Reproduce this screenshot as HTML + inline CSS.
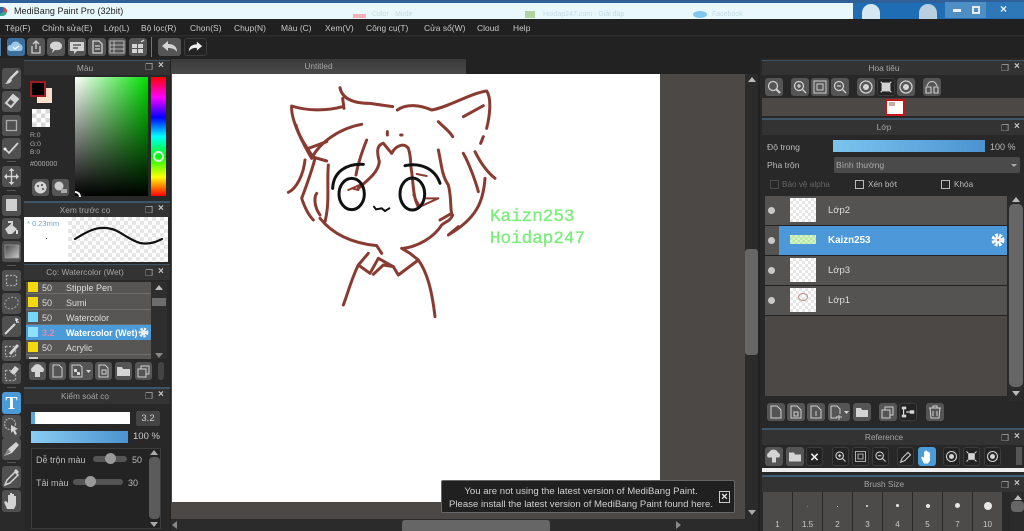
<!DOCTYPE html>
<html><head><meta charset="utf-8"><style>
html,body{margin:0;padding:0;width:1024px;height:531px;overflow:hidden;background:#262626}
body{position:relative;font-family:"Liberation Sans","Noto Sans CJK SC",sans-serif;font-size:9px;color:#bdbdbd;filter:blur(.35px)}
div,span,svg{position:absolute;box-sizing:border-box}
svg{stroke-width:1.3}
.t{white-space:nowrap;line-height:12px}
.m{top:22px;font-size:8.4px;color:#c8c8c8;white-space:nowrap;line-height:13px;letter-spacing:.05px}
.h{background:#333;height:15px;text-align:center;line-height:15px;color:#a5a5a5;font-size:8.3px;border-top:1px solid #3d5568}
.b{background:#555;border-radius:3px;width:18px;height:18px}
.d{background:#232323;border:1px solid #3c3c3c;border-radius:3px}
.tb{left:2px;width:19px;height:21px;background:#505050;border-radius:3px}
.b svg,.tb svg,.d svg{left:0;top:0;width:100%;height:100%}
.w{fill:#d4d4d4;stroke:none}
.s{fill:none;stroke:#cfcfcf}
.row{left:26px;width:125px;height:15px;background:#585654;border-bottom:1px solid #6d6d6d;color:#ddd;font-size:9px;line-height:16px}
.sw{left:2px;top:2px;width:10px;height:10px}
.lay{left:765px;width:242px;height:30px;background:#555351;border-bottom:1px solid #222}
.eye{left:3px;top:11px;width:7px;height:7px;border-radius:50%;background:#c9c9c9}
.th{left:25px;top:2px;width:26px;height:24px;background:repeating-conic-gradient(#e6e6e6 0 25%,#fff 0 50%) 0 0/6px 6px}
.ln{left:63px;top:9px;color:#ddd;font-size:9.5px;white-space:nowrap;line-height:12px}
.cell{top:492px;width:29px;height:39px;background:#4d4b49}
.cell i{position:absolute;left:0;right:0;top:28px;text-align:center;font-style:normal;font-size:8px;color:#ccc;line-height:10px}
.cell b{position:absolute;background:#e8e8e8;border-radius:50%}
</style></head><body>

<!-- title bar -->
<div style="left:0;top:0;width:1024px;height:19px;background:#e8f8fc"></div>
<div style="left:0;top:0;width:1024px;height:3px;background:#2f6098"></div>
<div style="left:853px;top:3px;width:171px;height:16px;background:#1f6db5"></div>
<div style="left:862px;top:4px;width:18px;height:15px;border-radius:9px 9px 0 0;background:#d5e7f3"></div>
<div style="left:919px;top:4px;width:18px;height:15px;border-radius:9px 9px 0 0;background:#b9cfe0"></div>
<div style="left:945px;top:2px;width:79px;height:16px;background:#4d8fc4"></div>
<div style="left:986px;top:2px;width:38px;height:16px;background:#2f78b8"></div>
<div style="left:953px;top:9px;width:8px;height:3px;background:#f0f0f0"></div>
<div style="left:972px;top:6px;width:8px;height:8px;border:2px solid #e8e8e8"></div>
<div class="t" style="left:1000px;top:3px;color:#eee;font-size:12px;font-weight:bold">×</div>
<div style="left:0;top:7px;width:7px;height:9px;border-radius:0 5px 5px 0;background:conic-gradient(#d44 0 30%,#3a8 0 65%,#36a 0)"></div>
<div class="t" style="left:14px;top:5px;color:#222;font-size:9px;letter-spacing:.05px">MediBang Paint Pro (32bit)</div>
<div style="left:353px;top:14px;width:13px;height:4px;background:#f0b0b8"></div>
<div class="t" style="left:372px;top:9px;font-size:7px;color:#c4dce4">Color · Mode</div>
<div style="left:525px;top:11px;width:10px;height:7px;background:#b0d4a0"></div>
<div class="t" style="left:543px;top:9px;font-size:7px;color:#c4dce4">Hoidap247.com · Giải đáp</div>
<div style="left:693px;top:11px;width:14px;height:7px;border-radius:50%;background:#80c8f0"></div>
<div class="t" style="left:712px;top:9px;font-size:7px;color:#c4dce4">Facebook</div>

<!-- menu -->
<div style="left:0;top:19px;width:1024px;height:17px;background:#202020;border-bottom:1px solid #2c2c2c"></div>
<span class="m" style="left:5px">Tệp(F)</span>
<span class="m" style="left:42px">Chỉnh sửa(E)</span>
<span class="m" style="left:104px">Lớp(L)</span>
<span class="m" style="left:141px">Bộ lọc(R)</span>
<span class="m" style="left:190px">Chọn(S)</span>
<span class="m" style="left:234px">Chụp(N)</span>
<span class="m" style="left:281px">Màu (C)</span>
<span class="m" style="left:325px">Xem(V)</span>
<span class="m" style="left:366px">Công cụ(T)</span>
<span class="m" style="left:424px">Cửa sổ(W)</span>
<span class="m" style="left:477px">Cloud</span>
<span class="m" style="left:513px">Help</span>

<!-- toolbar -->
<div style="left:0;top:37px;width:1024px;height:21px;background:#222"></div>
<div style="left:0;top:38px;width:1px;height:18px;background:#4a7ea6"></div>
<div class="b" style="left:7px;top:38px;background:#3c6f9c"><svg viewBox="0 0 18 18"><path d="M3 13a3 3 0 0 1 1-6 5 5 0 0 1 9-1 4 4 0 0 1 1 7z" fill="#9cc8ea"/><path d="M6 9l2 2 4-3" stroke="#fff" stroke-width="1.4" fill="none"/></svg></div>
<div class="b" style="left:27px;top:38px"><svg viewBox="0 0 18 18"><path class="s" d="M5 8v7h8V8M9 11V3M6 6l3-3 3 3"/></svg></div>
<div class="b" style="left:47px;top:38px"><svg viewBox="0 0 18 18"><path class="w" d="M3 8c0-6 12-6 12 0 0 5-6 4-7 4l-3 3 1-4c-2 0-3-1-3-3z"/></svg></div>
<div class="b" style="left:68px;top:38px"><svg viewBox="0 0 18 18"><path class="w" d="M2 4h14v9H9l-3 3v-3H2z"/><path d="M5 7h8M5 10h5" stroke="#444"/></svg></div>
<div class="b" style="left:88px;top:38px"><svg viewBox="0 0 18 18"><path class="s" d="M5 3h6l3 3v9H5zM7 8h5M7 11h5"/></svg></div>
<div class="b" style="left:108px;top:38px"><svg viewBox="0 0 18 18"><path class="s" d="M2 3h14v12H2zM2 7h14M2 11h14M6 3v12" stroke-width=".8"/></svg></div>
<div class="b" style="left:129px;top:38px"><svg viewBox="0 0 18 18"><path class="w" d="M3 6h5v4H3zM9 6h5v4H9zM3 11h5v4H3zM9 11h5v4H9z"/><path d="M12 4l3-2" stroke="#ddd"/></svg></div>
<div style="left:151px;top:37px;width:1px;height:20px;background:#4a7ea6"></div>
<div class="b" style="left:158px;top:38px;width:23px"><svg viewBox="0 0 23 18"><path class="w" d="M4 8l6-5v3c6 0 9 3 9 8-2-3-5-4-9-4v3z"/></svg></div>
<div class="d" style="left:184px;top:38px;width:23px;height:18px"><svg viewBox="0 0 23 18"><path d="M19 8l-6-5v3c-6 0-9 3-9 8 2-3 5-4 9-4v3z" fill="#eee"/></svg></div>

<!-- left tools -->
<div style="left:0;top:58px;width:24px;height:473px;background:#2a2a2a"></div>
<div class="tb" style="top:68px"><svg viewBox="0 0 19 21"><path d="M16 3L8 11" stroke="#d4d4d4" stroke-width="2.600"/><path class="w" d="M8 10l2 2c-1 3-4 4-7 4 2-1 2-4 5-6z"/></svg></div>
<div class="tb" style="top:91px"><svg viewBox="0 0 19 21"><path d="M4 12l7-8 5 4-7 8z" fill="none" stroke="#d4d4d4" stroke-width="2"/><path class="w" d="M10 5l6 3-3 4-5-4z"/></svg></div>
<div class="tb" style="top:115px"><svg viewBox="0 0 19 21"><rect x="4.500" y="5.500" width="10" height="10" fill="none" stroke="#aaa" stroke-width="1.300"/></svg></div>
<div class="tb" style="top:138px"><svg viewBox="0 0 19 21"><path d="M3 11l4 4 9-10" fill="none" stroke="#d4d4d4" stroke-width="1.800"/><circle cx="3" cy="11" r="1.500" fill="#eee"/></svg></div>
<div style="left:7px;top:161px;width:9px;height:1px;background:#555"></div>
<div class="tb" style="top:166px"><svg viewBox="0 0 19 21"><path d="M9.500 3v15M3 10.500h13" stroke="#d4d4d4" stroke-width="1.400"/><path class="w" d="M9.500 2l3 3h-6zM9.500 19l3-3h-6zM2 10.500l3-3v6zM17 10.500l-3-3v6z"/></svg></div>
<div style="left:7px;top:190px;width:9px;height:1px;background:#555"></div>
<div class="tb" style="top:195px"><svg viewBox="0 0 19 21"><rect x="4" y="4" width="11" height="12" fill="#d0d0d0"/></svg></div>
<div class="tb" style="top:218px"><svg viewBox="0 0 19 21"><path class="w" d="M3 11l6-5 6 5-5 5H6zM6 3h5v4H9V5H6z"/><path d="M15 12v4" stroke="#ddd" stroke-width="2"/></svg></div>
<div class="tb" style="top:241px"><svg viewBox="0 0 19 21"><defs><linearGradient id="g" x1="0" y1="0" x2="1" y2="1"><stop offset="0" stop-color="#444"/><stop offset="1" stop-color="#ccc"/></linearGradient></defs><rect x="3" y="4" width="14" height="13" fill="url(#g)" stroke="#999" stroke-width=".8"/></svg></div>
<div style="left:7px;top:265px;width:9px;height:1px;background:#555"></div>
<div class="tb" style="top:270px"><svg viewBox="0 0 19 21"><rect x="4.500" y="5.500" width="10" height="10" fill="none" stroke="#aaa" stroke-width="1.300" stroke-dasharray="2 1.500"/></svg></div>
<div class="tb" style="top:293px"><svg viewBox="0 0 19 21"><ellipse cx="9.500" cy="10" rx="7" ry="5.500" transform="rotate(-25 9.500 10)" fill="none" stroke="#999" stroke-width="1.200" stroke-dasharray="2 1.500"/></svg></div>
<div class="tb" style="top:316px"><svg viewBox="0 0 19 21"><path d="M3 18L13 8" stroke="#d4d4d4" stroke-width="2.200"/><path d="M14 2v3M17 6h-3M16 3l-2 2" stroke="#eee"/></svg></div>
<div class="tb" style="top:340px"><svg viewBox="0 0 19 21"><rect x="3.500" y="6.500" width="10" height="10" fill="none" stroke="#aaa" stroke-dasharray="2 1.500"/><path d="M7 13l8-9 2 2-8 9z" fill="#d4d4d4"/></svg></div>
<div class="tb" style="top:363px"><svg viewBox="0 0 19 21"><rect x="3.500" y="7.500" width="10" height="10" fill="none" stroke="#aaa" stroke-dasharray="2 1.500"/><path d="M8 9l5-6 4 3-5 6z" fill="#d4d4d4"/></svg></div>
<div style="left:7px;top:387px;width:9px;height:1px;background:#555"></div>
<div class="tb" style="top:392px;background:#4b9bd8;height:22px;text-align:center;color:#fff;font:bold 18px/22px 'Liberation Serif',serif">T</div>
<div class="tb" style="top:415px;height:23px"><svg viewBox="0 0 19 23"><circle cx="8" cy="9" r="5.500" fill="none" stroke="#aaa" stroke-width="1.300" stroke-dasharray="2 1"/><path class="w" d="M9 10l7 4-3 1 2 4-2 1-2-4-2 2z"/></svg></div>
<div class="tb" style="top:438px;height:22px"><svg viewBox="0 0 19 22"><path d="M2 18l4-7 8-7 3 3-7 8z" fill="#d4d4d4"/><path d="M2 18l4-7 3 3z" fill="#888"/></svg></div>
<div style="left:7px;top:462px;width:9px;height:1px;background:#555"></div>
<div class="tb" style="top:466px;height:22px"><svg viewBox="0 0 19 22"><path d="M3 19l2-5 8-8 3 3-8 8z" fill="none" stroke="#d4d4d4" stroke-width="1.500"/><path class="w" d="M12 5l2-2 3 3-2 2z"/></svg></div>
<div class="tb" style="top:490px;height:22px"><svg viewBox="0 0 19 22"><path class="w" d="M5 19l-3-7 2-1 2 2V5h2v6V3h2v8V4h2v7V6h2v9l-2 4z"/></svg></div>

<!-- left panels -->
<div style="left:24px;top:59px;width:146px;height:472px;background:#282828"></div>
<div class="h" style="left:24px;top:60px;width:146px;padding-right:24px">Màu</div>
<div class="t" style="left:145px;top:61px;color:#aaa;font-size:9px">❐</div>
<div class="t" style="left:158px;top:60px;color:#c8c8c8;font-size:10px;font-weight:bold">×</div>
<div style="left:37px;top:88px;width:15px;height:15px;background:#fbdfcb"></div>
<div style="left:30px;top:81px;width:16px;height:16px;background:#000;border:2px solid #a11a1f"></div>
<div style="left:32px;top:109px;width:18px;height:18px;background:repeating-conic-gradient(#d8d8d8 0 25%,#fff 0 50%) 0 0/9px 9px"></div>
<div class="t" style="left:30px;top:132px;font-size:6.800px;color:#aaa;line-height:8.500px">R:0<br>G:0<br>B:0</div>
<div class="t" style="left:30px;top:159px;font-size:7px;color:#aaa">#000000</div>
<div style="left:75px;top:77px;width:73px;height:119px;background:linear-gradient(to top,#000,rgba(0,0,0,0)),linear-gradient(to right,#fff,#00e000)"></div>
<div style="left:151px;top:77px;width:15px;height:119px;background:linear-gradient(to bottom,#f00,#f0f 17%,#00f 34%,#0ff 50%,#0f0 67%,#ff0 84%,#f00)"></div>
<div style="left:153px;top:151px;width:11px;height:11px;border-radius:50%;border:2px solid #e8e8e8"></div>
<div style="left:75px;top:191px;width:6px;height:6px;border-top:2px solid #eee;border-right:2px solid #eee;border-radius:0 6px 0 0"></div>
<div class="b" style="left:32px;top:179px;width:17px;height:17px"><svg viewBox="0 0 17 17"><circle cx="8.500" cy="8.500" r="6" fill="#d4d4d4"/><circle cx="6" cy="7" r="1" fill="#444"/><circle cx="10" cy="6" r="1" fill="#444"/><circle cx="11" cy="10" r="1" fill="#444"/></svg></div>
<div class="b" style="left:52px;top:179px;width:17px;height:17px"><svg viewBox="0 0 17 17"><circle cx="7" cy="7" r="4.500" fill="#ccc"/><rect x="9" y="10" width="6" height="4" fill="#aaa"/></svg></div>
<div style="left:24px;top:201px;width:146px;height:2px;background:#3d5568"></div>

<div class="h" style="left:24px;top:203px;width:146px;padding-right:24px;border:0">Xem trước cọ</div>
<div class="t" style="left:145px;top:204px;color:#aaa;font-size:9px">❐</div>
<div class="t" style="left:158px;top:203px;color:#c8c8c8;font-size:10px;font-weight:bold">×</div>
<div style="left:24px;top:217px;width:44px;height:45px;background:#fff"></div>
<div style="left:68px;top:217px;width:100px;height:45px;background:repeating-conic-gradient(#e6e6e6 0 25%,#fff 0 50%) 0 0/8px 8px"></div>
<div class="t" style="left:27px;top:218px;font-size:7.500px;color:#6aa8cf">* 0.23mm</div>
<div style="left:46px;top:238px;width:1px;height:1px;background:#333"></div>
<svg style="left:68px;top:217px" width="100" height="45" viewBox="0 0 100 45"><path d="M7 22C20 14 28 10 38 11 52 12 58 22 72 26 82 28 90 24 94 22" fill="none" stroke="#111" stroke-width="2.200" stroke-linecap="round"/></svg>

<div style="left:24px;top:264px;width:146px;height:1px;background:#3d5568"></div>
<div class="h" style="left:24px;top:265px;width:146px;padding-right:24px;border:0">Cọ: Watercolor (Wet)</div>
<div class="t" style="left:145px;top:267px;color:#aaa;font-size:9px">❐</div>
<div class="t" style="left:158px;top:266px;color:#c8c8c8;font-size:10px;font-weight:bold">×</div>
<div style="left:26px;top:282px;width:125px;height:77px;overflow:hidden;background:#585654"></div>
<div class="row" style="top:282px;height:12px;overflow:hidden"><div class="sw" style="top:0;background:#f5d90e"></div><span style="left:16px;top:-2px">50</span><span style="left:40px;top:-2px;white-space:nowrap">Stipple Pen</span></div>
<div class="row" style="top:295px"><div class="sw" style="background:#f5d90e"></div><span style="left:16px">50</span><span style="left:40px">Sumi</span></div>
<div class="row" style="top:310px"><div class="sw" style="background:#76d8f8"></div><span style="left:16px">50</span><span style="left:40px">Watercolor</span></div>
<div class="row" style="top:325px;background:#4b9bd8;font-weight:bold;color:#fff;border:0"><div class="sw" style="background:#8fe0fb"></div><span style="left:16px;color:#e08aa8">3.2</span><span style="left:40px;white-space:nowrap;width:76px;overflow:hidden">Watercolor (Wet)</span><svg style="left:112px;top:2px" width="11" height="11" viewBox="0 0 11 11"><circle cx="5.500" cy="5.500" r="3.200" fill="none" stroke="#eee" stroke-width="3.500" stroke-dasharray="2 1"/><circle cx="5.500" cy="5.500" r="2.500" fill="#eee"/></svg></div>
<div class="row" style="top:340px"><div class="sw" style="background:#f5d90e"></div><span style="left:16px">50</span><span style="left:40px">Acrylic</span></div>
<div style="left:29px;top:357px;width:9px;height:2px;background:#ccc"></div>
<div style="left:151px;top:282px;width:16px;height:77px;background:#2e2e2e"></div>
<div style="left:152px;top:298px;width:14px;height:8px;background:#6d6d6d"></div>
<div style="left:155px;top:285px;border:4px solid transparent;border-bottom:5px solid #bbb;border-top:0"></div>
<div style="left:155px;top:353px;border:4px solid transparent;border-top:5px solid #888;border-bottom:0"></div>
<div class="b" style="left:29px;top:362px;width:17px"><svg viewBox="0 0 17 18"><path class="w" d="M3 10a3 3 0 0 1 1-5 5 5 0 0 1 9 0 3 3 0 0 1 1 5h-3v5H6v-5z"/></svg></div>
<div class="b" style="left:49px;top:362px;width:17px"><svg viewBox="0 0 17 18"><path class="s" d="M4 3h6l3 3v9H4z" stroke-width="1"/></svg></div>
<div class="b" style="left:69px;top:362px;width:24px"><svg viewBox="0 0 24 18"><path class="s" d="M3 3h8l2 2v10H3z" stroke-width="1"/><path class="w" d="M5 7h3v3H5zM8 10h3v3H8zM17 8h5l-2.500 3z"/></svg></div>
<div class="b" style="left:95px;top:362px;width:17px"><svg viewBox="0 0 17 18"><path class="s" d="M4 3h6l3 3v9H4zM7 8h4v4H7z" stroke-width="1"/></svg></div>
<div class="b" style="left:115px;top:362px;width:17px"><svg viewBox="0 0 17 18"><path class="w" d="M2 5h5l1 2h7v7H2z"/></svg></div>
<div class="b" style="left:135px;top:362px;width:17px"><svg viewBox="0 0 17 18"><path class="s" d="M3 7h8v8H3zM6 7V4h8v8h-3" stroke-width="1"/></svg></div>
<div class="b" style="left:158px;top:362px;width:6px;background:#444"></div>

<div style="left:24px;top:387px;width:146px;height:2px;background:#3d5568"></div>
<div class="h" style="left:24px;top:389px;width:146px;padding-right:24px;border:0">Kiểm soát cọ</div>
<div class="t" style="left:145px;top:390px;color:#aaa;font-size:9px">❐</div>
<div class="t" style="left:158px;top:389px;color:#c8c8c8;font-size:10px;font-weight:bold">×</div>
<div style="left:31px;top:412px;width:99px;height:12px;background:#fff"></div>
<div style="left:31px;top:412px;width:4px;height:12px;background:#5aa5dd"></div>
<div style="left:136px;top:411px;width:24px;height:15px;background:#444;border-radius:2px;color:#ccc;text-align:center;font-size:9.500px;line-height:15px">3.2</div>
<div style="left:31px;top:431px;width:97px;height:12px;background:linear-gradient(to right,#8accf2,#4b93d0)"></div>
<div class="t" style="left:133px;top:431px;color:#ccc;font-size:9.500px">100 %</div>
<div style="left:31px;top:448px;width:130px;height:81px;background:#232323;border:1px solid #3c3c3c"></div>
<div class="t" style="left:36px;top:454px;color:#bbb;font-size:9px">Dễ trộn màu</div>
<div style="left:93px;top:456px;width:34px;height:6px;background:#555;border-radius:3px"></div>
<div style="left:105px;top:453px;width:11px;height:11px;background:#999;border-radius:50%"></div>
<div class="t" style="left:132px;top:454px;color:#bbb;font-size:9px">50</div>
<div class="t" style="left:36px;top:477px;color:#bbb;font-size:9px">Tải màu</div>
<div style="left:73px;top:479px;width:50px;height:6px;background:#555;border-radius:3px"></div>
<div style="left:85px;top:476px;width:11px;height:11px;background:#999;border-radius:50%"></div>
<div class="t" style="left:128px;top:477px;color:#bbb;font-size:9px">30</div>
<div style="left:149px;top:457px;width:11px;height:62px;background:#5b5b5b;border-radius:4px"></div>
<div style="left:150px;top:450px;border:4px solid transparent;border-bottom:5px solid #aaa;border-top:0"></div>
<div style="left:150px;top:522px;border:4px solid transparent;border-top:5px solid #aaa;border-bottom:0"></div>

<!-- canvas area -->
<div style="left:170px;top:58px;width:590px;height:473px;background:#222"></div>
<div style="left:171px;top:59px;width:295px;height:15px;background:linear-gradient(#3a3a3a,#4a4a4a);text-align:center;color:#a5a5a5;font-size:8.300px;line-height:15px">Untitled</div>
<div style="left:171px;top:74px;width:574px;height:445px;background:#4b4846"></div>
<div style="left:172px;top:74px;width:488px;height:428px;background:#fff"></div>
<svg style="left:270px;top:75px" width="330" height="250" viewBox="0 0 990 750">
<g fill="none" stroke="#8a3b31" stroke-width="9" stroke-linecap="round" stroke-linejoin="round">
<path d="M218 95C170 108 110 108 65 93 62 130 90 190 125 250 150 200 210 160 275 148"/>
<path d="M78 150C85 180 105 210 125 240M110 222L170 200M125 245L170 258"/>
<path d="M210 38C215 65 240 85 300 85L368 95M218 70L222 100"/>
<path d="M382 105C410 85 450 90 485 105 540 95 600 55 650 48 665 70 660 120 650 160"/>
<path d="M580 125L640 92M505 140C525 160 540 170 548 185M640 185L632 205"/>
<path d="M352 170V180M392 180H396" stroke-width="9"/>
<path d="M290 195C280 220 265 260 258 300"/>
<path d="M340 205C320 210 320 230 328 260 325 290 300 310 265 340"/>
<path d="M340 205L365 235C375 215 400 200 415 220 425 250 420 270 425 290 430 330 430 370 445 395"/>
<path d="M505 225C515 270 515 300 535 330 545 370 540 395 545 415L510 435"/>
<path d="M580 235C600 270 620 330 625 350M615 230C630 260 650 290 675 310"/>
<path d="M645 310C640 380 620 430 535 480L565 455"/>
<path d="M105 255C100 300 80 340 55 352M135 250C125 290 110 330 95 370 105 400 115 420 130 435"/>
<path d="M175 270C170 330 180 380 165 440M140 355C130 370 135 400 150 420"/>
<path d="M150 430C190 480 250 505 320 512L335 535M400 520C440 515 490 490 515 450 525 440 540 440 548 420"/>
<path d="M295 535L265 570 300 595 325 550 370 575 385 600 445 555 420 535 395 520"/>
<path d="M310 598L340 570 370 575"/>
<path d="M265 570C245 610 235 650 220 690M445 555C470 590 485 640 495 725"/>
<path d="M235 345L280 325M245 340L265 345M430 360L450 395 505 370M470 370L505 370M440 297L470 303" stroke-width="6"/>
</g>
<g fill="none" stroke="#111" stroke-width="9" stroke-linecap="round">
<path d="M188 340C190 290 230 265 280 268M405 272C450 262 495 280 510 325"/>
<ellipse cx="245" cy="357" rx="38" ry="47"/>
<ellipse cx="427" cy="357" rx="37" ry="48"/>
<path d="M312 395L318 403 335 400 345 408 358 400" stroke-width="6"/>
</g>
</svg>
<div class="t" style="left:490px;top:207px;font:17.600px/21.500px 'Liberation Mono',monospace;color:#78ee78;-webkit-text-stroke:.3px #78ee78">Kaizn253<br>Hoidap247</div>

<!-- scrollbars -->
<div style="left:745px;top:74px;width:13px;height:445px;background:#2b2b2b"></div>
<div style="left:745px;top:249px;width:13px;height:106px;background:#666;border-radius:3px"></div>
<div style="left:748px;top:77px;border:4px solid transparent;border-bottom:5px solid #bbb;border-top:0"></div>
<div style="left:748px;top:510px;border:4px solid transparent;border-top:5px solid #aaa;border-bottom:0"></div>
<div style="left:171px;top:519px;width:587px;height:12px;background:#2b2b2b"></div>
<div style="left:402px;top:520px;width:148px;height:11px;background:#666;border-radius:3px 3px 0 0"></div>
<div style="left:172px;top:521px;border:4px solid transparent;border-right:5px solid #888;border-left:0"></div>
<div style="left:676px;top:521px;border:4px solid transparent;border-left:5px solid #888;border-right:0"></div>

<!-- notification -->
<div style="left:441px;top:480px;width:294px;height:33px;background:#202020;border:1px solid #666;border-radius:2px"></div>
<div class="t" style="left:443px;top:485px;width:276px;text-align:center;color:#d0d0d0;font-size:9.600px;line-height:13px">You are not using the latest version of MediBang Paint.<br>Please install the latest version of MediBang Paint found here.</div>
<div style="left:719px;top:491px;width:11px;height:12px;border:1px solid #ccc;color:#eee;font:bold 11px/10px 'Liberation Sans',sans-serif;text-align:center">×</div>

<!-- right panels -->
<div style="left:760px;top:58px;width:264px;height:473px;background:#282828"></div>
<div class="h" style="left:762px;top:60px;width:262px;padding-right:18px;line-height:14px">Hoa tiêu</div>
<div class="t" style="left:1001px;top:62px;color:#aaa;font-size:9px">❐</div>
<div class="t" style="left:1014px;top:61px;color:#c8c8c8;font-size:10px;font-weight:bold">×</div>
<div class="b" style="left:765px;top:78px"><svg viewBox="0 0 18 18"><circle cx="8" cy="8" r="4.500" class="s"/><path class="s" d="M11 11l4 4" stroke-width="2"/></svg></div>
<div class="b" style="left:791px;top:78px"><svg viewBox="0 0 18 18"><circle cx="8" cy="8" r="4.500" class="s"/><path class="s" d="M11 11l4 4M6 8h4M8 6v4"/></svg></div>
<div class="b" style="left:811px;top:78px"><svg viewBox="0 0 18 18"><path class="s" d="M3 3h12v12H3zM6 6h6v6H6z" stroke-width="1"/></svg></div>
<div class="b" style="left:831px;top:78px"><svg viewBox="0 0 18 18"><circle cx="8" cy="8" r="4.500" class="s"/><path class="s" d="M11 11l4 4M6 8h4"/></svg></div>
<div class="b" style="left:857px;top:78px"><svg viewBox="0 0 18 18"><circle cx="9" cy="9" r="6" class="s"/><circle cx="9" cy="9" r="3" class="w"/></svg></div>
<div class="d" style="left:877px;top:78px;width:18px;height:18px"><svg viewBox="0 0 18 18"><rect x="4" y="4" width="10" height="10" class="w"/><path class="s" d="M3 3l2 2M15 3l-2 2M3 15l2-2M15 15l-2-2"/></svg></div>
<div class="b" style="left:897px;top:78px"><svg viewBox="0 0 18 18"><circle cx="9" cy="9" r="6" class="s"/><circle cx="9" cy="9" r="3" class="w"/></svg></div>
<div class="b" style="left:923px;top:78px"><svg viewBox="0 0 18 18"><path class="s" d="M3 9h5v6H3zM11 9h4v6h-4zM4 8c2-6 8-6 10 0" stroke-width="1.100"/></svg></div>
<div style="left:762px;top:98px;width:262px;height:18px;background:#4b4846"></div>
<div style="left:885px;top:99px;width:20px;height:17px;background:#fff;border:2px solid #c01818"></div>
<div style="left:889px;top:102px;width:6px;height:4px;background:#cfa8a0"></div>

<div style="left:762px;top:118px;width:262px;height:2px;background:#3d5568"></div>
<div class="h" style="left:762px;top:120px;width:262px;padding-right:18px;border:0">Lớp</div>
<div class="t" style="left:1001px;top:122px;color:#aaa;font-size:9px">❐</div>
<div class="t" style="left:1014px;top:121px;color:#c8c8c8;font-size:10px;font-weight:bold">×</div>
<div class="t" style="left:767px;top:141px;color:#bbb;font-size:8.600px">Độ trong</div>
<div style="left:833px;top:140px;width:152px;height:12px;background:linear-gradient(to right,#7cc4ee,#4b93d0)"></div>
<div class="t" style="left:990px;top:141px;color:#bbb;font-size:9px">100 %</div>
<div class="t" style="left:767px;top:159px;color:#bbb;font-size:8.600px">Pha trộn</div>
<div style="left:834px;top:157px;width:186px;height:16px;background:#4a4a4a;border-radius:2px"></div>
<div class="t" style="left:836px;top:159px;color:#aaa;font-size:8.600px">Bình thường</div>
<div style="left:1011px;top:164px;border:3px solid transparent;border-top:3px solid #aaa;border-bottom:0"></div>
<div style="left:770px;top:180px;width:9px;height:9px;border:1px solid #4a4a4a"></div>
<div class="t" style="left:782px;top:179px;color:#666;font-size:8.200px">Bảo vệ alpha</div>
<div style="left:855px;top:180px;width:9px;height:9px;border:1px solid #bbb"></div>
<div class="t" style="left:868px;top:179px;color:#bbb;font-size:8.200px">Xén bớt</div>
<div style="left:941px;top:180px;width:9px;height:9px;border:1px solid #bbb"></div>
<div class="t" style="left:954px;top:179px;color:#bbb;font-size:8.200px">Khóa</div>

<div style="left:765px;top:196px;width:242px;height:200px;background:#4b4846"></div>
<div class="lay" style="top:196px"><div class="eye"></div><div class="th"></div><div class="ln">Lớp2</div></div>
<div class="lay" style="top:226px"><div class="eye"></div><div style="left:14px;top:0;width:228px;height:29px;background:#4c98d8"></div><div class="th" style="top:9px;height:9px;background:repeating-conic-gradient(#b8e8a8 0 25%,#d8f4c8 0 50%) 0 0/5px 5px"></div><div class="ln" style="color:#fff;font-weight:bold;font-size:9.800px">Kaizn253</div><svg style="left:226px;top:7px" width="14" height="14" viewBox="0 0 14 14"><circle cx="7" cy="7" r="4.500" fill="none" stroke="#fff" stroke-width="4" stroke-dasharray="2.500 1.200"/><circle cx="7" cy="7" r="3.500" fill="#f4f4f4"/><circle cx="7" cy="7" r="1" fill="#a55"/></svg></div>
<div class="lay" style="top:256px"><div class="eye"></div><div class="th"></div><div class="ln">Lớp3</div></div>
<div class="lay" style="top:286px"><div class="eye"></div><div class="th"><div style="left:8px;top:5px;width:10px;height:8px;border:1px solid #c08a8a;border-radius:50%"></div></div><div class="ln">Lớp1</div></div>
<div style="left:1008px;top:196px;width:15px;height:205px;background:#2b2b2b"></div>
<div style="left:1009px;top:204px;width:14px;height:183px;background:#666;border-radius:5px"></div>
<div style="left:1012px;top:197px;border:4px solid transparent;border-bottom:5px solid #bbb;border-top:0"></div>
<div style="left:1012px;top:391px;border:4px solid transparent;border-top:5px solid #bbb;border-bottom:0"></div>

<div class="b" style="left:767px;top:403px"><svg viewBox="0 0 18 18"><path class="s" d="M4 3h6l4 4v8H4z" stroke-width="1"/></svg></div>
<div class="b" style="left:787px;top:403px"><svg viewBox="0 0 18 18"><path class="s" d="M4 3h6l4 4v8H4zM7 9h4v4H7z" stroke-width="1"/></svg></div>
<div class="b" style="left:807px;top:403px"><svg viewBox="0 0 18 18"><path class="s" d="M4 3h6l4 4v8H4zM9 8v5" stroke-width="1"/></svg></div>
<div class="b" style="left:828px;top:403px;width:22px"><svg viewBox="0 0 22 18"><path class="s" d="M3 3h6l3 3v5M3 3v12h6M11 12v5M8 14h6" stroke-width="1"/><path class="w" d="M16 8h5l-2.500 3z"/></svg></div>
<div class="b" style="left:853px;top:403px"><svg viewBox="0 0 18 18"><path class="w" d="M3 5h5l1 2h6v7H3z"/></svg></div>
<div class="b" style="left:879px;top:403px"><svg viewBox="0 0 18 18"><path class="s" d="M3 7h8v8H3zM6 7V4h8v8h-3" stroke-width="1"/></svg></div>
<div class="d" style="left:899px;top:403px;width:18px;height:18px"><svg viewBox="0 0 18 18"><path class="w" d="M2 3h5v3H2zM2 12h5v3H2zM11 7h5v4h-5z"/><path d="M4 6v6M7 9h4" stroke="#ddd"/></svg></div>
<div class="b" style="left:926px;top:403px"><svg viewBox="0 0 18 18"><path class="s" d="M3 5h12M7 5V3h4v2M4 5l1 10h8l1-10M7 8v5M11 8v5" stroke-width="1"/></svg></div>

<div style="left:762px;top:428px;width:262px;height:2px;background:#3d5568"></div>
<div class="h" style="left:762px;top:430px;width:262px;padding-right:18px;border:0">Reference</div>
<div class="t" style="left:1001px;top:432px;color:#aaa;font-size:9px">❐</div>
<div class="t" style="left:1014px;top:431px;color:#c8c8c8;font-size:10px;font-weight:bold">×</div>
<div class="b" style="left:765px;top:447px;height:19px"><svg viewBox="0 0 18 18"><path class="w" d="M3 10a3 3 0 0 1 1-5 5 5 0 0 1 9 0 3 3 0 0 1 1 5h-3v5H7v-5z"/></svg></div>
<div class="b" style="left:786px;top:447px;height:19px"><svg viewBox="0 0 18 18"><path class="w" d="M3 5h5l1 2h6v7H3z"/></svg></div>
<div class="d" style="left:806px;top:447px;width:17px;height:19px"><svg viewBox="0 0 17 18"><path d="M5 6l7 7M12 6l-7 7" stroke="#eee" stroke-width="1.800"/></svg></div>
<div class="d" style="left:832px;top:447px;width:17px;height:19px"><svg viewBox="0 0 18 18"><circle cx="8" cy="8" r="4.500" class="s"/><path class="s" d="M11 11l4 4M6 8h4M8 6v4"/></svg></div>
<div class="d" style="left:852px;top:447px;width:17px;height:19px"><svg viewBox="0 0 18 18"><path class="s" d="M3 3h12v12H3zM6 6h6v6H6z" stroke-width="1"/></svg></div>
<div class="d" style="left:872px;top:447px;width:17px;height:19px"><svg viewBox="0 0 18 18"><circle cx="8" cy="8" r="4.500" class="s"/><path class="s" d="M11 11l4 4M6 8h4"/></svg></div>
<div class="d" style="left:897px;top:447px;width:17px;height:19px"><svg viewBox="0 0 18 18"><path class="s" d="M3 16l2-5 7-7 3 3-7 7z"/></svg></div>
<div class="b" style="left:918px;top:447px;height:19px;background:#4b9bd8"><svg viewBox="0 0 18 18"><path d="M6 16l-3-6 2-1 1 2V4h1.500v6V3H9v7V4h1.500v6V5H12v8l-2 3z" fill="#fff"/></svg></div>
<div class="d" style="left:943px;top:447px;width:17px;height:19px"><svg viewBox="0 0 18 18"><circle cx="9" cy="9" r="6" class="s"/><circle cx="9" cy="9" r="3" class="w"/></svg></div>
<div class="d" style="left:963px;top:447px;width:17px;height:19px"><svg viewBox="0 0 18 18"><rect x="5" y="5" width="8" height="8" class="w"/><path class="s" d="M3 3l2 2M15 3l-2 2M3 15l2-2M15 15l-2-2"/></svg></div>
<div class="d" style="left:984px;top:447px;width:17px;height:19px"><svg viewBox="0 0 18 18"><circle cx="9" cy="9" r="6" class="s"/><circle cx="9" cy="9" r="3" class="w"/></svg></div>
<div style="left:1016px;top:447px;width:6px;height:18px;background:#555"></div>
<div style="left:762px;top:468px;width:262px;height:4px;background:#eee"></div>

<div style="left:762px;top:475px;width:262px;height:2px;background:#3d5f70"></div>
<div class="h" style="left:762px;top:477px;width:262px;padding-right:18px;border:0">Brush Size</div>
<div class="t" style="left:1001px;top:479px;color:#aaa;font-size:9px">❐</div>
<div class="t" style="left:1014px;top:478px;color:#c8c8c8;font-size:10px;font-weight:bold">×</div>
<div class="cell" style="left:763px"><i>1</i></div>
<div class="cell" style="left:793px"><b style="left:14px;top:14px;width:1px;height:1px;background:#888"></b><i>1.5</i></div>
<div class="cell" style="left:823px"><b style="left:14px;top:14px;width:1px;height:1px"></b><i>2</i></div>
<div class="cell" style="left:853px"><b style="left:13px;top:13px;width:2px;height:2px"></b><i>3</i></div>
<div class="cell" style="left:883px"><b style="left:13px;top:12px;width:3px;height:3px"></b><i>4</i></div>
<div class="cell" style="left:913px"><b style="left:13px;top:12px;width:4px;height:4px"></b><i>5</i></div>
<div class="cell" style="left:943px"><b style="left:12px;top:11px;width:5px;height:5px"></b><i>7</i></div>
<div class="cell" style="left:973px"><b style="left:11px;top:10px;width:8px;height:8px"></b><i>10</i></div>
<div style="left:1010px;top:492px;width:14px;height:39px;background:#2b2b2b"></div>
<div style="left:1011px;top:501px;width:13px;height:11px;background:#666;border-radius:4px"></div>
<div style="left:1014px;top:495px;border:4px solid transparent;border-bottom:5px solid #bbb;border-top:0"></div>
</body></html>
